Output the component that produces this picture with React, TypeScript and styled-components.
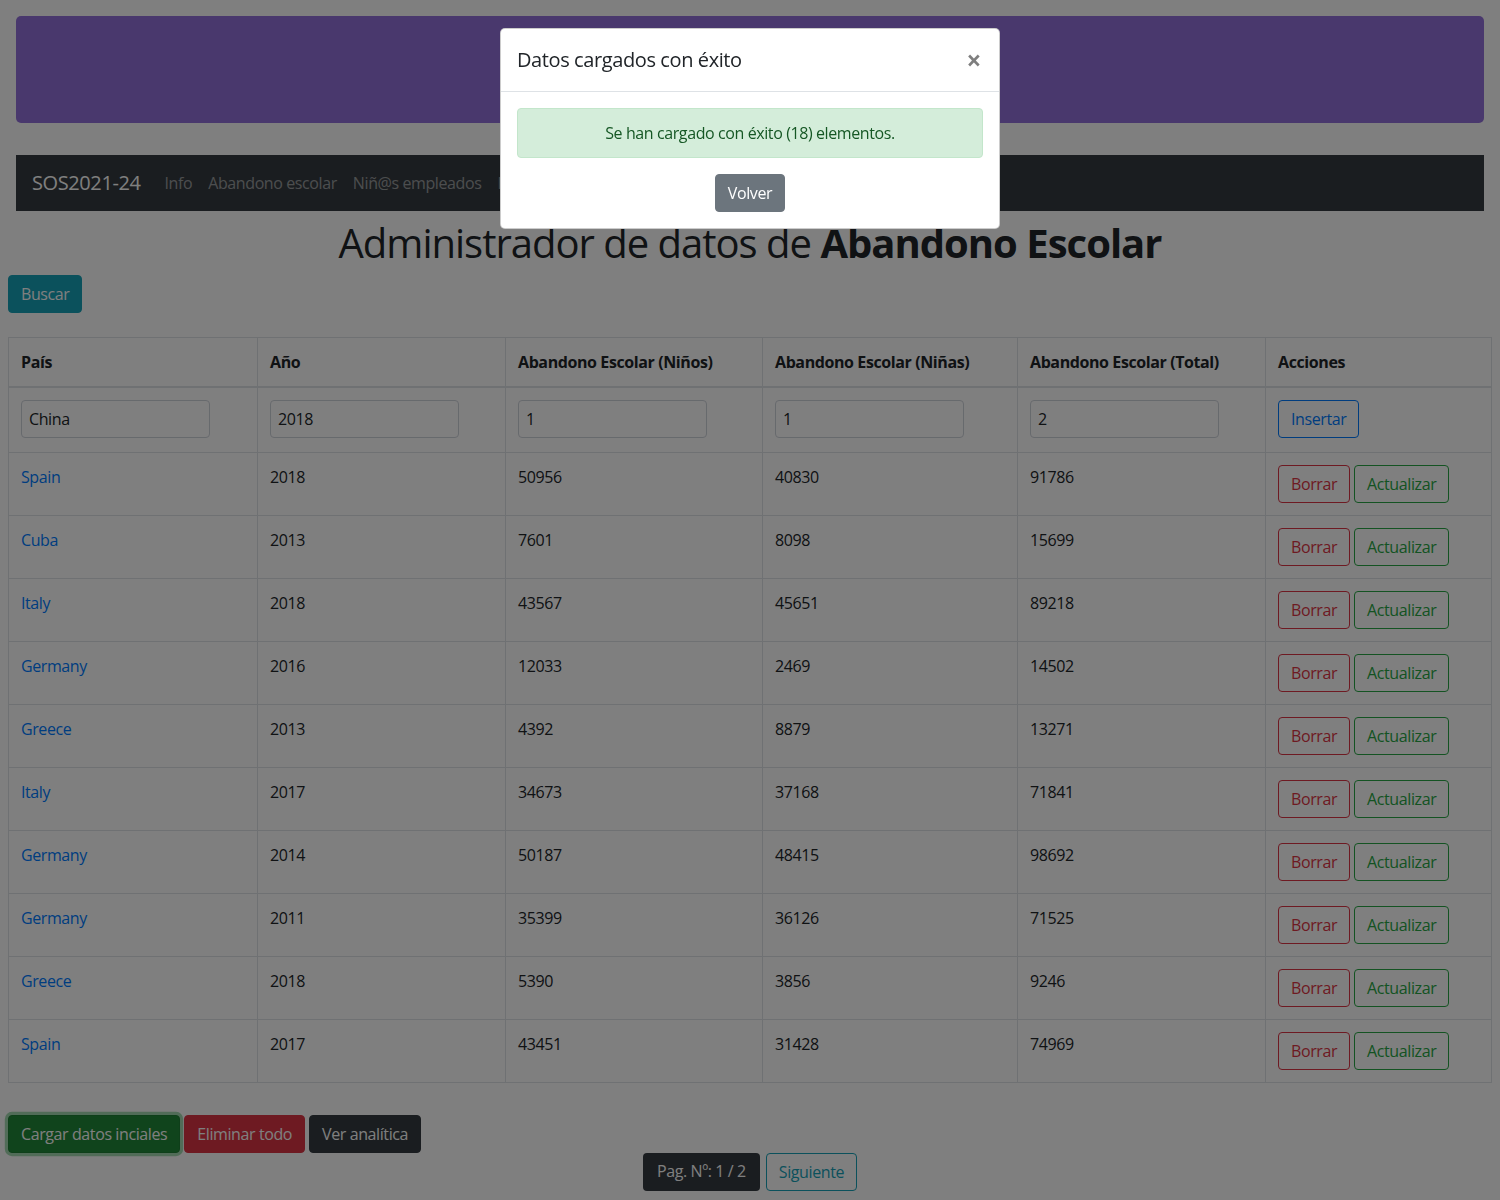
import React from 'react';
import styled, { createGlobalStyle, css } from 'styled-components';

type Variant =
  | 'info'
  | 'success'
  | 'danger'
  | 'dark'
  | 'secondary'
  | 'outline-primary'
  | 'outline-danger'
  | 'outline-success'
  | 'outline-info';

const COLORS: Record<string, string> = {
  primary: '#007bff',
  success: '#28a745',
  danger: '#dc3545',
  info: '#17a2b8',
  dark: '#343a40',
  secondary: '#6c757d',
};

const GlobalStyle = createGlobalStyle`
  body {
    margin: 0;
    font-family: 'Open Sans', 'Noto Sans', sans-serif;
    font-size: 16px;
    line-height: 1.5;
    letter-spacing: -0.4px;
    color: #212529;
    background: #fff;
  }
  * { box-sizing: border-box; }
`;

const rows = [
  { country: 'Spain', year: 2018, boys: 50956, girls: 40830, total: 91786 },
  { country: 'Cuba', year: 2013, boys: 7601, girls: 8098, total: 15699 },
  { country: 'Italy', year: 2018, boys: 43567, girls: 45651, total: 89218 },
  { country: 'Germany', year: 2016, boys: 12033, girls: 2469, total: 14502 },
  { country: 'Greece', year: 2013, boys: 4392, girls: 8879, total: 13271 },
  { country: 'Italy', year: 2017, boys: 34673, girls: 37168, total: 71841 },
  { country: 'Germany', year: 2014, boys: 50187, girls: 48415, total: 98692 },
  { country: 'Germany', year: 2011, boys: 35399, girls: 36126, total: 71525 },
  { country: 'Greece', year: 2018, boys: 5390, girls: 3856, total: 9246 },
  { country: 'Spain', year: 2017, boys: 43451, girls: 31428, total: 74969 },
];

const colWidths = [249, 248, 257, 255, 248];

const App = () => {
  return (
    <>
      <GlobalStyle />
      <Page>
        <Banner />
        <Navbar>
          <Brand>SOS2021-24</Brand>
          <NavLink>Info</NavLink>
          <NavLink>Abandono escolar</NavLink>
          <NavLink>Niñ@s empleados</NavLink>
          <NavLink>Integraciones</NavLink>
        </Navbar>

        <Title>
          Administrador de datos de <strong>Abandono Escolar</strong>
        </Title>

        <Btn variant="info">Buscar</Btn>

        <Table>
          <colgroup>
            { colWidths.map((w, i) => <col key={i} style={{ width: w }} />) }
            <col />
          </colgroup>
          <thead>
            <tr>
              <Th>País</Th>
              <Th>Año</Th>
              <Th>Abandono Escolar (Niños)</Th>
              <Th>Abandono Escolar (Niñas)</Th>
              <Th>Abandono Escolar (Total)</Th>
              <Th>Acciones</Th>
            </tr>
          </thead>
          <tbody>
            <tr>
              <Td form><Input defaultValue="China" /></Td>
              <Td form><Input defaultValue="2018" /></Td>
              <Td form><Input defaultValue="1" /></Td>
              <Td form><Input defaultValue="1" /></Td>
              <Td form><Input defaultValue="2" /></Td>
              <Td form><Btn variant="outline-primary">Insertar</Btn></Td>
            </tr>
            { rows.map((row, index) => (
              <tr key={index}>
                <Td><CountryLink>{ row.country }</CountryLink></Td>
                <Td>{ row.year }</Td>
                <Td>{ row.boys }</Td>
                <Td>{ row.girls }</Td>
                <Td>{ row.total }</Td>
                <Td>
                  <ButtonGroup>
                    <Btn variant="outline-danger">Borrar</Btn>
                    <Btn variant="outline-success">Actualizar</Btn>
                  </ButtonGroup>
                </Td>
              </tr>
            )) }
          </tbody>
        </Table>

        <ButtonGroup>
          <Btn variant="success" focused>Cargar datos inciales</Btn>
          <Btn variant="danger">Eliminar todo</Btn>
          <Btn variant="dark">Ver analítica</Btn>
        </ButtonGroup>

        <Pagination>
          <PageBadge>Pag. Nº: 1 / 2</PageBadge>
          <Btn variant="outline-info">Siguiente</Btn>
        </Pagination>
      </Page>

      <Backdrop>
        <Dialog>
          <ModalHeader>
            <ModalTitle>Datos cargados con éxito</ModalTitle>
            <Close>×</Close>
          </ModalHeader>
          <ModalBody>
            <Alert>Se han cargado con éxito (18) elementos.</Alert>
            <Btn variant="secondary">Volver</Btn>
          </ModalBody>
        </Dialog>
      </Backdrop>
    </>
  );
};

export default App;

const Page = styled.div`
  padding: 8px;
`;

const Banner = styled.div`
  height: 107px;
  margin: 8px 8px 0;
  background: #9370db;
  border-radius: 5px;
`;

const Navbar = styled.nav`
  display: flex;
  align-items: center;
  height: 56px;
  margin: 32px 8px 8px;
  padding: 8px 16px;
  background: #343a40;
`;

const Brand = styled.span`
  margin-right: 16px;
  font-size: 20px;
  color: #fff;
`;

const NavLink = styled.span`
  padding: 0 8px;
  color: rgba(255, 255, 255, 0.5);
`;

const Title = styled.h1`
  margin: 0 0 8px;
  font-size: 40px;
  font-weight: 500;
  line-height: 1.2;
  letter-spacing: -1px;
  text-align: center;

  strong {
    font-weight: 700;
  }
`;

const Btn = styled.button<{ variant: Variant; focused?: boolean }>`
  display: inline-block;
  padding: 6px 12px;
  font-family: inherit;
  font-size: 16px;
  line-height: 1.5;
  letter-spacing: inherit;
  border: 1px solid transparent;
  border-radius: 4px;
  cursor: pointer;
  white-space: nowrap;

  ${({ variant }) => {
    if (variant.startsWith('outline-')) {
      const c = COLORS[variant.replace('outline-', '')];
      return css`
        background: transparent;
        color: ${c};
        border-color: ${c};
      `;
    }
    const c = COLORS[variant];
    return css`
      background: ${c};
      color: #fff;
      border-color: ${c};
    `;
  }}

  ${({ focused }) => focused && css`
    background: #218838;
    border-color: #1e7e34;
    box-shadow: 0 0 0 3.2px rgba(72, 180, 97, 0.5);
  `}
`;

const Table = styled.table`
  width: 100%;
  margin: 24px 0 32px;
  border-collapse: collapse;
  table-layout: fixed;
  border: 1px solid #dee2e6;
`;

const Th = styled.th`
  padding: 12px;
  text-align: left;
  vertical-align: bottom;
  font-weight: 700;
  border: 1px solid #dee2e6;
  border-bottom-width: 2px;
`;

const Td = styled.td<{ form?: boolean }>`
  padding: 12px 12px ${({ form }) => (form ? '14px' : '12px')};
  vertical-align: top;
  border: 1px solid #dee2e6;
`;

const Input = styled.input`
  display: block;
  width: 189px;
  height: 38px;
  padding: 6px 7px;
  font-family: inherit;
  font-size: 16px;
  letter-spacing: inherit;
  color: #212529;
  border: 1px solid #ced4da;
  border-radius: 4px;
`;

const CountryLink = styled.a`
  color: #007bff;
  text-decoration: none;
`;

const ButtonGroup = styled.div`
  display: flex;
  gap: 4px;
`;

const Pagination = styled.div`
  display: flex;
  justify-content: center;
  gap: 6px;
`;

const PageBadge = styled.span`
  padding: 6px 14px;
  color: #fff;
  background: #343a40;
  border-radius: 4px;
`;

const Backdrop = styled.div`
  position: fixed;
  inset: 0;
  background: rgba(0, 0, 0, 0.5);
`;

const Dialog = styled.div`
  width: 500px;
  margin: 28px auto;
  background: #fff;
  border: 1px solid rgba(0, 0, 0, 0.2);
  border-radius: 5px;
`;

const ModalHeader = styled.div`
  display: flex;
  align-items: center;
  justify-content: space-between;
  padding: 16px;
  border-bottom: 1px solid #dee2e6;
`;

const ModalTitle = styled.h5`
  margin: 0;
  font-size: 20px;
  font-weight: 500;
  line-height: 1.5;
`;

const Close = styled.span`
  margin-right: 2px;
  font-size: 26px;
  font-weight: 700;
  line-height: 1;
  color: #000;
  opacity: 0.5;
`;

const ModalBody = styled.div`
  padding: 16px;
  text-align: center;
`;

const Alert = styled.div`
  margin-bottom: 16px;
  padding: 12px 20px;
  color: #155724;
  background: #d4edda;
  border: 1px solid #c3e6cb;
  border-radius: 4px;
`;
